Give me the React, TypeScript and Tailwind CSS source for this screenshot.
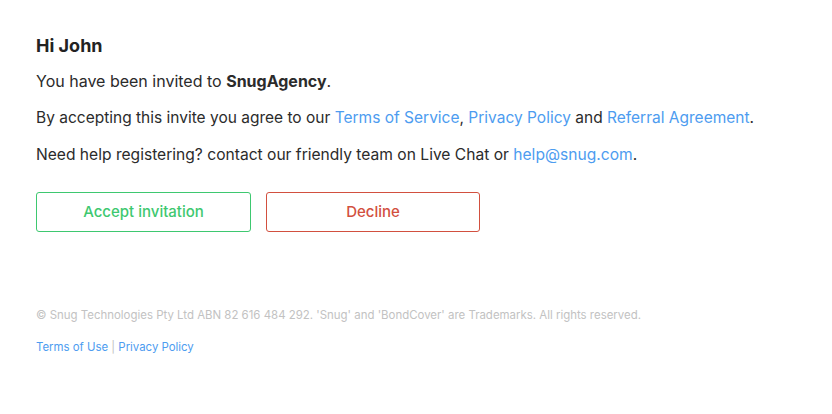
export default function App() {
  return (
    <div className="w-[832px] h-[414px] bg-white font-['Inter',sans-serif] text-[#2b2b2b]">
      <div className="pl-[36px] pt-[34px]">
        <h1 className="text-[18px] font-bold leading-[24px] text-[#222222]">Hi John</h1>
        <p className="mt-[11px] text-[16px] leading-[24px]">
          You have been invited to <span className="font-bold">SnugAgency</span>.
        </p>
        <p className="mt-[13px] text-[15.5px] leading-[24px]">
          By accepting this invite you agree to our <a className="text-[#4d9cf0]">Terms of Service</a>, <a className="text-[#4d9cf0]">Privacy Policy</a> and <a className="text-[#4d9cf0]">Referral Agreement</a>.
        </p>
        <p className="mt-[13px] text-[15.6px] leading-[24px]">
          Need help registering? contact our friendly team on Live Chat or <a className="text-[#4d9cf0]">help@snug.com</a>.
        </p>
        <div className="mt-[25px] flex gap-[15px]">
          <button className="w-[215px] h-[40px] rounded-[3px] border border-[#3ec870] text-[#3ec870] text-[15px] font-medium">Accept invitation</button>
          <button className="w-[214px] h-[40px] rounded-[3px] border border-[#d2503f] text-[#d2503f] text-[15px] font-medium">Decline</button>
        </div>
        <p className="mt-[75px] text-[11.45px] leading-[16px] text-[#c2c2c2]">
          © Snug Technologies Pty Ltd ABN 82 616 484 292. 'Snug' and 'BondCover' are Trademarks. All rights reserved.
        </p>
        <p className="mt-[16px] text-[11.4px] leading-[16px] text-[#c2c2c2]">
          <a className="text-[#4d9cf0]">Terms of Use</a> | <a className="text-[#4d9cf0]">Privacy Policy</a>
        </p>
      </div>
    </div>
  );
}
